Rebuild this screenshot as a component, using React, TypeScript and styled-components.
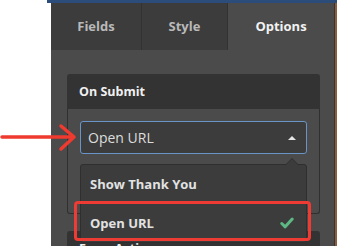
import React from "react";
import styled, { createGlobalStyle } from "styled-components";

const Global = createGlobalStyle`
  html, body { margin: 0; padding: 0; background: #fff; }
  body { font-family: "Open Sans", "Liberation Sans", sans-serif; width: 337px; height: 246px; overflow: hidden; }
`;

const Page = styled.div`
  position: relative;
  width: 337px;
  height: 246px;
  overflow: hidden;
  display: flex;
  flex-direction: column;
`;

const TopBar = styled.div`
  margin-left: 47px;
  height: 3px;
  background: #2c4d7a;
  flex-shrink: 0;
`;

const Row = styled.div`
  display: flex;
  flex: 1;
`;

const Gutter = styled.div`
  width: 51px;
  flex-shrink: 0;
  background: #fff;
`;

const Panel = styled.div`
  width: 283px;
  border-right: 1px solid #353535;
  background: #4b4b4b;
  display: flex;
  flex-direction: column;
`;

const Edge = styled.div`
  width: 2px;
  background: #8b5d3e;
`;

const Tabs = styled.div`
  display: flex;
  height: 47px;
`;

const Tab = styled.div<{ $w: number; $active?: boolean; $sep?: boolean }>`
  width: ${(p) => p.$w}px;
  display: flex;
  align-items: center;
  justify-content: center;
  background: ${(p) => (p.$active ? "#4b4b4b" : "#3c3c3c")};
  color: ${(p) => (p.$active ? "#f2f2f2" : "#b9b9b9")};
  border-right: ${(p) => (p.$sep ? "1px solid #323232" : "none")};
  box-sizing: border-box;
  font-weight: 700;
  font-size: 13px;
  padding-bottom: 1px;
`;

const Body = styled.div`
  padding: 24px 14px 0 16px;
  display: flex;
  flex-direction: column;
  gap: 17px;
`;

const Card = styled.div`
  width: 253px;
  display: flex;
  flex-direction: column;
`;

const CardHeader = styled.div`
  height: 35px;
  background: #333333;
  border-radius: 3px 3px 0 0;
  display: flex;
  align-items: center;
  padding-left: 12px;
  color: #f0f0f0;
  font-weight: 700;
  font-size: 12.5px;
`;

const CardBody = styled.div`
  border: 1px solid #303030;
  border-top: none;
  border-radius: 0 0 3px 3px;
  padding: 12px 12px 13px 12px;
  display: flex;
  flex-direction: column;
  gap: 13px;
`;

const Select = styled.div`
  height: 33px;
  box-sizing: border-box;
  border: 1px solid #6a94c8;
  border-radius: 3px;
  background: #3c3c3c;
  display: flex;
  align-items: center;
  justify-content: space-between;
  padding: 0 10px 0 7px;
  color: #dcdcdc;
  font-size: 14px;
`;

const Caret = styled.span`
  width: 0;
  height: 0;
  border-left: 4px solid transparent;
  border-right: 4px solid transparent;
  border-bottom: 4px solid #e6e6e6;
  margin-top: 1px;
`;

const Input = styled.div`
  height: 33px;
  box-sizing: border-box;
  border: 1px solid #333;
  border-radius: 3px;
  background: #3c3c3c;
`;

const Menu = styled.div`
  position: absolute;
  left: 80px;
  top: 164px;
  width: 227px;
  box-sizing: border-box;
  background: #3c3c3c;
  border: 1px solid #2f2f2f;
  border-radius: 3px;
  display: flex;
  flex-direction: column;
`;

const MenuArrow = styled.div`
  position: absolute;
  top: -7px;
  right: 7px;
  width: 0;
  height: 0;
  border-left: 7px solid transparent;
  border-right: 7px solid transparent;
  border-bottom: 7px solid #2f2f2f;
  &::after {
    content: "";
    position: absolute;
    left: -6px;
    top: 1px;
    border-left: 6px solid transparent;
    border-right: 6px solid transparent;
    border-bottom: 6px solid #3c3c3c;
  }
`;

const MenuItem = styled.div<{ $sep?: boolean }>`
  height: 38px;
  display: flex;
  align-items: center;
  justify-content: space-between;
  padding: 0 12px 0 9px;
  color: #e2e2e2;
  font-weight: 700;
  font-size: 13px;
  border-top: ${(p) => (p.$sep ? "1px solid #333" : "none")};
`;

const Highlight = styled.div`
  position: absolute;
  left: 74px;
  top: 201px;
  width: 237px;
  height: 40px;
  box-sizing: border-box;
  border: 3px solid #ee3b33;
  border-radius: 4px;
`;

const ArrowSvg = styled.svg`
  position: absolute;
  left: 0;
  top: 120px;
`;

export default function App() {
  return (
    <>
      <Global />
      <Page>
        <TopBar />
        <Row>
          <Gutter />
          <Panel>
            <Tabs>
              <Tab $w={91} $sep>Fields</Tab>
              <Tab $w={86} $sep>Style</Tab>
              <Tab $w={106} $active>Options</Tab>
            </Tabs>
            <Body>
              <Card>
                <CardHeader>On Submit</CardHeader>
                <CardBody>
                  <Select>
                    <span>Open URL</span>
                    <Caret />
                  </Select>
                  <Input />
                </CardBody>
              </Card>
              <Card>
                <CardHeader>Form Actions</CardHeader>
              </Card>
            </Body>
          </Panel>
          <Edge />
        </Row>
        <Menu>
          <MenuArrow />
          <MenuItem>Show Thank You</MenuItem>
          <MenuItem $sep>
            <span>Open URL</span>
            <svg width="14" height="12" viewBox="0 0 14 12">
              <path d="M1.8 6.5 L5.2 9.8 L12.2 2" fill="none" stroke="#5db883" strokeWidth="3" strokeLinecap="round" strokeLinejoin="round" />
            </svg>
          </MenuItem>
        </Menu>
        <Highlight />
        <ArrowSvg width="80" height="36" viewBox="0 0 80 36">
          <g stroke="#ef3a30" strokeWidth="3.5" strokeLinecap="round" strokeLinejoin="round" fill="none">
            <path d="M2 17 L73 17" />
            <path d="M61 6 L74 17 L61 29" />
          </g>
        </ArrowSvg>
      </Page>
    </>
  );
}
